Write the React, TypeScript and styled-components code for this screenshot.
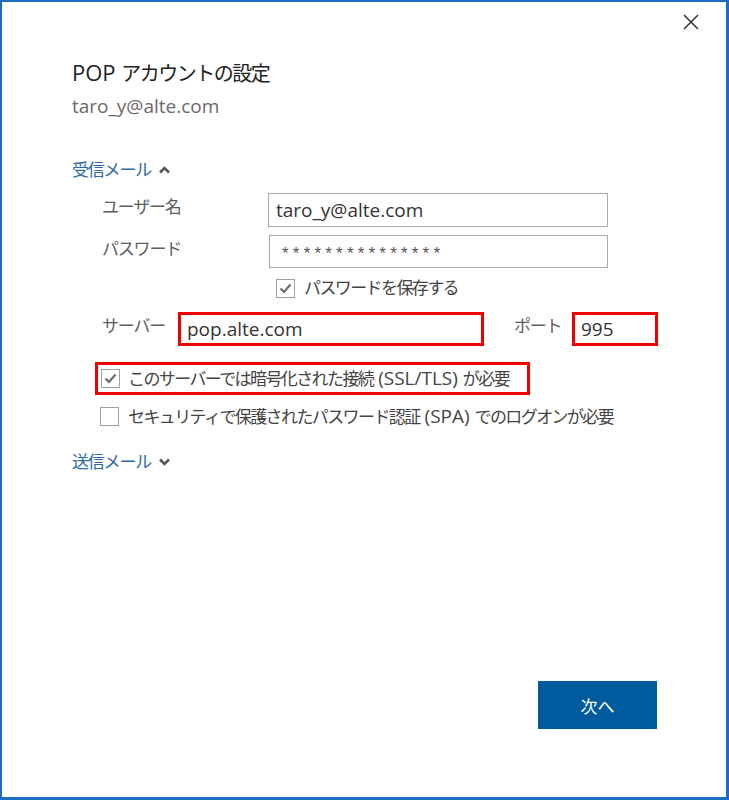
import React from "react";
import styled, { createGlobalStyle } from "styled-components";

const GlobalStyle = createGlobalStyle`
  html, body {
    margin: 0;
    padding: 0;
    background: #ffffff;
  }
  body {
    font-family: "Open Sans", "Noto Sans CJK JP", sans-serif;
  }
`;

function CheckMark() {
  return (
    <svg width="13" height="11" viewBox="0 0 13 11">
      <path d="M1.5 5.5 L5 9 L11.5 1.5" fill="none" stroke="#6b6b6b" strokeWidth="2.2" />
    </svg>
  );
}

function Checkbox({ checked }: { checked?: boolean }) {
  return <Box>{checked && <CheckMark />}</Box>;
}

function Chevron({ up }: { up?: boolean }) {
  return (
    <svg width="11" height="8" viewBox="0 0 11 8">
      <path
        d={up ? "M1 6.5 L5.5 2 L10 6.5" : "M1 1.5 L5.5 6 L10 1.5"}
        fill="none"
        stroke="#555"
        strokeWidth="2.6"
      />
    </svg>
  );
}

export default function App() {
  return (
    <>
      <GlobalStyle />
      <Window>
        <TopBar>
          <CloseButton aria-label="閉じる">
            <svg width="16" height="16" viewBox="0 0 16 16">
              <path d="M1 1 L15 15 M15 1 L1 15" stroke="#333" strokeWidth="1.5" />
            </svg>
          </CloseButton>
        </TopBar>
        <Content>
          <Title>
            <Latin size={22}>POP </Latin>アカウントの設定
          </Title>
          <Account>taro_y@alte.com</Account>

          <SectionHeader>
            受信メール <Chevron up />
          </SectionHeader>

          <Form>
            <Row>
              <Label width={166}>ユーザー名</Label>
              <Input width={340} height={34}>taro_y@alte.com</Input>
            </Row>
            <Row gap={8}>
              <Label width={167}>パスワード</Label>
              <Input width={339} height={33}>
                <Stars>***************</Stars>
              </Input>
            </Row>
            <CheckRow indent={174} gap={8}>
              <Checkbox checked />
              <CheckText>パスワードを保存する</CheckText>
            </CheckRow>
            <Row gap={12}>
              <Label width={76}>サーバー</Label>
              <Input width={306} height={34} marked>
                pop.alte.com
              </Input>
              <Label width={58} lead={30}>
                ポート
              </Label>
              <Input width={86} height={34} marked>
                995
              </Input>
            </Row>
            <MarkedRow>
              <Checkbox checked />
              <CheckText>
                このサーバーでは暗号化された接続<Latin size={19}> (SSL/TLS) </Latin>が必要
              </CheckText>
            </MarkedRow>
            <CheckRow indent={-2} gap={9}>
              <Checkbox />
              <CheckText>
                セキュリティで保護されたパスワード認証<Latin size={19}> (SPA) </Latin>でのログオンが必要
              </CheckText>
            </CheckRow>
          </Form>

          <SectionHeader gap={22}>
            送信メール <Chevron />
          </SectionHeader>
        </Content>
        <Footer>
          <NextButton>次へ</NextButton>
        </Footer>
      </Window>
    </>
  );
}

const Window = styled.div`
  width: 729px;
  height: 800px;
  box-sizing: border-box;
  border: 2px solid #1b6ec2;
  border-right-width: 3px;
  border-bottom-width: 3px;
  background: #ffffff;
  display: flex;
  flex-direction: column;
`;

const TopBar = styled.div`
  display: flex;
  justify-content: flex-end;
  padding: 12px 27px 0 0;
`;

const CloseButton = styled.button`
  width: 16px;
  height: 16px;
  padding: 0;
  border: none;
  background: none;
  display: flex;
`;

const Content = styled.div`
  padding-left: 70px;
  display: flex;
  flex-direction: column;
`;

const Latin = styled.span<{ size: number }>`
  font-family: "Open Sans", sans-serif;
  font-size: ${(p) => p.size}px;
  letter-spacing: 0;
`;

const Title = styled.h1`
  margin: 28px 0 0;
  height: 28px;
  font-size: 20px;
  line-height: 28px;
  font-weight: 400;
  color: #222;
  letter-spacing: -1.5px;
`;

const Account = styled.div`
  margin-top: 8px;
  font-size: 19px;
  line-height: 24px;
  color: #6a6a6a;
`;

const SectionHeader = styled.div<{ gap?: number }>`
  margin-top: ${(p) => p.gap ?? 40}px;
  display: flex;
  align-items: center;
  gap: 6px;
  font-size: 17px;
  line-height: 24px;
  color: #2d6aa6;
  letter-spacing: -1.2px;
  svg {
    margin-left: 2px;
  }
`;

const Form = styled.div`
  margin: 11px 0 0 30px;
  display: flex;
  flex-direction: column;
`;

const Row = styled.div<{ gap?: number }>`
  display: flex;
  align-items: flex-start;
  margin-top: ${(p) => p.gap ?? 0}px;
`;

const Label = styled.div<{ width: number; lead?: number }>`
  width: ${(p) => p.width}px;
  margin-left: ${(p) => p.lead ?? 0}px;
  flex-shrink: 0;
  font-size: 17px;
  line-height: 28px;
  color: #5e5e5e;
  letter-spacing: -1.2px;
`;

const Input = styled.div<{ width: number; height: number; marked?: boolean }>`
  width: ${(p) => p.width}px;
  height: ${(p) => p.height}px;
  box-sizing: border-box;
  border: ${(p) => (p.marked ? "3px solid #ee0000" : "1px solid #a9a9a9")};
  padding-left: ${(p) => (p.marked ? 6 : 7)}px;
  display: flex;
  align-items: center;
  font-size: 19px;
  color: #333;
`;

const Stars = styled.span`
  font-family: "Liberation Sans", sans-serif;
  letter-spacing: 4.2px;
  font-size: 17px;
  padding: 5px 0 0 5px;
  color: #555;
`;

const CheckRow = styled.div<{ indent: number; gap: number }>`
  display: flex;
  align-items: center;
  gap: 9px;
  margin: ${(p) => p.gap}px 0 0 ${(p) => p.indent}px;
  height: 24px;
`;

const MarkedRow = styled.div`
  display: flex;
  align-items: center;
  gap: 8px;
  width: 435px;
  height: 33px;
  box-sizing: border-box;
  margin: 16px 0 0 -7px;
  padding-left: 3px;
  border: 3px solid #ee0000;
`;

const Box = styled.span`
  width: 19px;
  height: 19px;
  box-sizing: border-box;
  border: 1px solid #a0a0a0;
  background: #fff;
  display: flex;
  align-items: center;
  justify-content: center;
  flex-shrink: 0;
`;

const CheckText = styled.span`
  font-size: 17px;
  line-height: 24px;
  color: #444;
  letter-spacing: -1.6px;
  white-space: nowrap;
`;

const Footer = styled.div`
  margin-top: auto;
  display: flex;
  justify-content: flex-end;
  padding: 0 69px 68px 0;
`;

const NextButton = styled.button`
  width: 119px;
  height: 48px;
  border: none;
  background: #005a9e;
  color: #fff;
  font-family: "Open Sans", "Noto Sans CJK JP", sans-serif;
  font-size: 17px;
`;
